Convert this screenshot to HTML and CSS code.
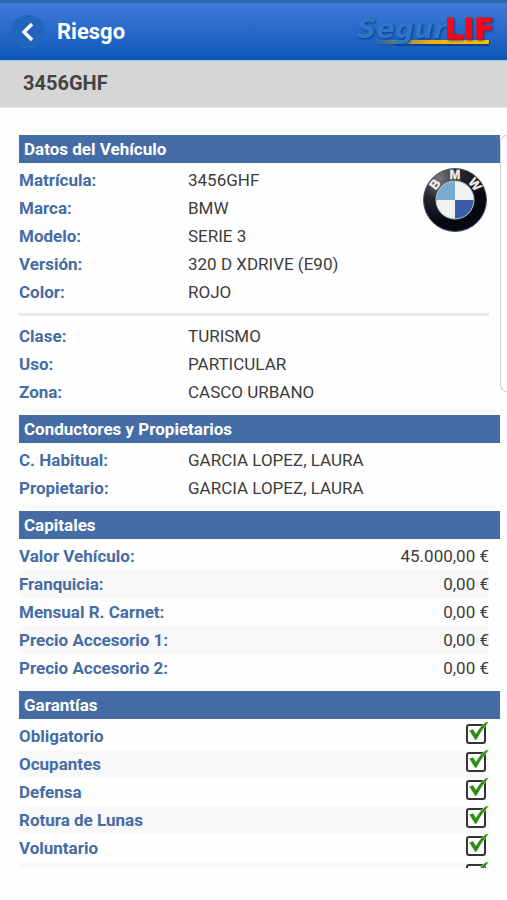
FILE: index.html
```html
<!DOCTYPE html>
<html lang="es">
<head>
  <meta charset="UTF-8" />
  <meta name="viewport" content="width=device-width, initial-scale=1" />
  <title>Riesgo</title>
  <link rel="stylesheet" href="styles.css">
</head>
<body>

<!-- Cabecera -->
<header class="header">
  <button class="back" type="button" aria-label="Volver">
    <svg width="34" height="34" viewBox="0 0 34 34">
      <path d="M21 9 L13 17 L21 25" fill="none" stroke="#fff" stroke-width="3.400"/>
    </svg>
  </button>
  <h1>Riesgo</h1>
  <svg class="logo" width="150" height="48" viewBox="0 0 150 48" role="img" aria-label="SegurLIF">
    <defs>
      <linearGradient id="line" x1="0" x2="1" y1="0" y2="0">
        <stop offset="0" stop-color="#8a9060" stop-opacity="0"/>
        <stop offset="0.350" stop-color="#b59a40"/>
        <stop offset="0.500" stop-color="#f0b010"/>
        <stop offset="1" stop-color="#ffc400"/>
      </linearGradient>
      <linearGradient id="line-shadow" x1="0" x2="1" y1="0" y2="0">
        <stop offset="0" stop-color="#0b3f8a" stop-opacity="0"/>
        <stop offset="0.400" stop-color="#0b3f8a"/>
      </linearGradient>
    </defs>
    <rect x="20" y="33" width="117" height="5" rx="2" fill="url(#line-shadow)"/>
    <rect x="19" y="32" width="117" height="4" rx="1" fill="url(#line)"/>
    <text class="logo-segur" x="4" y="30">Segur</text>
    <text class="logo-lif" x="92" y="31">LIF</text>
  </svg>
</header>
<div class="plate">3456GHF</div>

<div class="pages">
  <main class="content">
    <!-- Datos del vehículo -->
    <section>
      <h2>Datos del Vehículo</h2>
      <div class="vehicle">
        <dl class="data">
          <div><dt>Matrícula:</dt><dd>3456GHF</dd></div>
          <div><dt>Marca:</dt><dd>BMW</dd></div>
          <div><dt>Modelo:</dt><dd>SERIE 3</dd></div>
          <div><dt>Versión:</dt><dd>320 D XDRIVE (E90)</dd></div>
          <div><dt>Color:</dt><dd>ROJO</dd></div>
        </dl>
        <svg class="brand" width="66" height="66" viewBox="0 0 66 66" role="img" aria-label="BMW">
          <defs>
            <radialGradient id="ring" cx="0.250" cy="0.150" r="0.700">
              <stop offset="0" stop-color="#77787c"/>
              <stop offset="0.500" stop-color="#24252c"/>
              <stop offset="1" stop-color="#070912"/>
            </radialGradient>
          </defs>
          <circle cx="33" cy="33" r="31.500" fill="url(#ring)" stroke="#55565c"/>
          <circle cx="33" cy="33" r="19" fill="#f1f1ef"/>
          <path d="M33 33 V14 A19 19 0 0 0 14 33 Z" fill="#76acd0"/>
          <path d="M33 33 V52 A19 19 0 0 0 52 33 Z" fill="#3b5cab"/>
          <circle cx="33" cy="33" r="19" fill="none" stroke="#b9bcc2"/>
          <text x="33" y="12">M</text>
          <text x="33" y="12" transform="rotate(-52 33 33)">B</text>
          <text x="33" y="12" transform="rotate(52 33 33)">W</text>
        </svg>
      </div>
      <hr>
      <dl class="data">
        <div><dt>Clase:</dt><dd>TURISMO</dd></div>
        <div><dt>Uso:</dt><dd>PARTICULAR</dd></div>
        <div><dt>Zona:</dt><dd>CASCO URBANO</dd></div>
      </dl>
    </section>

    <!-- Conductores -->
    <section>
      <h2>Conductores y Propietarios</h2>
      <dl class="data">
        <div><dt>C. Habitual:</dt><dd>GARCIA LOPEZ, LAURA</dd></div>
        <div><dt>Propietario:</dt><dd>GARCIA LOPEZ, LAURA</dd></div>
      </dl>
    </section>

    <!-- Capitales -->
    <section>
      <h2>Capitales</h2>
      <dl class="data striped amounts">
        <div><dt>Valor Vehículo:</dt><dd>45.000,00 €</dd></div>
        <div><dt>Franquicia:</dt><dd>0,00 €</dd></div>
        <div><dt>Mensual R. Carnet:</dt><dd>0,00 €</dd></div>
        <div><dt>Precio Accesorio 1:</dt><dd>0,00 €</dd></div>
        <div><dt>Precio Accesorio 2:</dt><dd>0,00 €</dd></div>
      </dl>
    </section>

    <!-- Garantías -->
    <section>
      <h2>Garantías</h2>
      <div class="data striped checks">
        <div><label for="obligatorio">Obligatorio</label><input type="checkbox" id="obligatorio" checked></div>
        <div><label for="ocupantes">Ocupantes</label><input type="checkbox" id="ocupantes" checked></div>
        <div><label for="defensa">Defensa</label><input type="checkbox" id="defensa" checked></div>
        <div><label for="lunas">Rotura de Lunas</label><input type="checkbox" id="lunas" checked></div>
        <div><label for="voluntario">Voluntario</label><input type="checkbox" id="voluntario" checked></div>
        <div><input type="checkbox" id="otra" aria-label="Otra garantía" checked></div>
      </div>
    </section>
  </main>
  <!-- Borde de la página siguiente -->
  <div class="next-page"></div>
</div>

</body>
</html>
```
FILE: styles.css
```css
* {
  box-sizing: border-box;
}

body {
  margin: 0;
  height: 100vh;
  padding-bottom: 32px;
  display: flex;
  flex-direction: column;
  overflow: hidden;
  font-family: Roboto, sans-serif;
  font-size: 17px;
  color: #3c3c3c;
  background: #fefefe;
}

/* Cabecera */
.header {
  flex: none;
  display: flex;
  align-items: center;
  height: 61px;
  padding: 0 4px 0 11px;
  border-top: 3px solid #2769a8;
  border-bottom: 1px solid #a9c3e8;
  background: linear-gradient(#407bd8, #0d57b9);
}

.back {
  width: 34px;
  height: 34px;
  padding: 0;
  border: none;
  border-radius: 50%;
  background: #2364bd;
  cursor: pointer;
}

.back svg {
  display: block;
}

h1 {
  flex: 1;
  margin: 0 0 0 12px;
  font-size: 22px;
  font-weight: bold;
  color: #fff;
}

.logo-segur {
  font: italic bold 27px "DejaVu Sans", sans-serif;
  fill: #2d78c9;
  filter: drop-shadow(1px 1px 1px #0a3b80);
}

.logo-lif {
  font: bold 29px "DejaVu Sans", sans-serif;
  fill: #fb0714;
  stroke: #fb0714;
  filter: drop-shadow(1px 1px 1px #0a3b80);
}

/* Matrícula */
.plate {
  flex: none;
  padding: 0 23px;
  height: 47px;
  line-height: 45px;
  font-size: 20px;
  font-weight: bold;
  color: #444;
  background: #d6d6d6;
  border-bottom: 1px solid #e6e6e6;
}

/* Contenido */
.pages {
  flex: 1;
  min-height: 0;
  display: flex;
  overflow: hidden;
  padding-top: 27px;
}

.content {
  flex: 1;
  margin-left: 19px;
}

.next-page {
  width: 7px;
  height: 257px;
  border: 1px solid #cfcfcf;
  border-right: none;
  border-radius: 7px 0 0 7px;
}

section {
  padding-bottom: 9px;
}

h2 {
  margin: 0 0 3px;
  padding: 0 5px;
  line-height: 28px;
  font-size: 17px;
  font-weight: bold;
  color: #fff;
  background: #456ca5;
}

.data {
  margin: 0 11px 0 0;
}

.data > div {
  display: flex;
  height: 28px;
  line-height: 28px;
}

.striped > div:nth-child(even) {
  background: #f8f8f8;
}

dt,
label {
  width: 169px;
  font-weight: bold;
  color: #456ca5;
}

dd {
  margin: 0;
}

.amounts dd {
  flex: 1;
  text-align: right;
}

hr {
  height: 3px;
  margin: 7px 11px 6px 0;
  border: none;
  background: #e8e8e8;
}

/* Logotipo de la marca */
.vehicle {
  display: flex;
  justify-content: space-between;
}

.vehicle .data {
  margin: 0;
}

.brand {
  margin: 1px 12px 0 0;
}

.brand text {
  font: bold 13px "Liberation Sans", sans-serif;
  text-anchor: middle;
  fill: #eee;
  stroke: #eee;
  stroke-width: .4;
}

/* Casillas */
.checks > div {
  justify-content: space-between;
}

.checks input {
  appearance: none;
  width: 24px;
  height: 24px;
  margin: 0 0 0 auto;
  background: url("data:image/svg+xml,%3Csvg xmlns='http://www.w3.org/2000/svg' viewBox='0 0 24 24'%3E%3Crect x='2' y='3' width='18' height='18' rx='2' fill='%23fff' stroke='%23333' stroke-width='2'/%3E%3C/svg%3E") no-repeat;
}

.checks input:checked {
  background-image: url("data:image/svg+xml,%3Csvg xmlns='http://www.w3.org/2000/svg' viewBox='0 0 24 24'%3E%3Crect x='2' y='3' width='18' height='18' rx='2' fill='%23fff' stroke='%23333' stroke-width='2'/%3E%3Cpath d='M4 8.500 L8 7 L11 11.500 Q15 4 21 0 L24 0 Q17 7 11.500 18 L10 18 Z' fill='%232a9010' stroke='%23fff' stroke-width='.5'/%3E%3C/svg%3E");
}
```
